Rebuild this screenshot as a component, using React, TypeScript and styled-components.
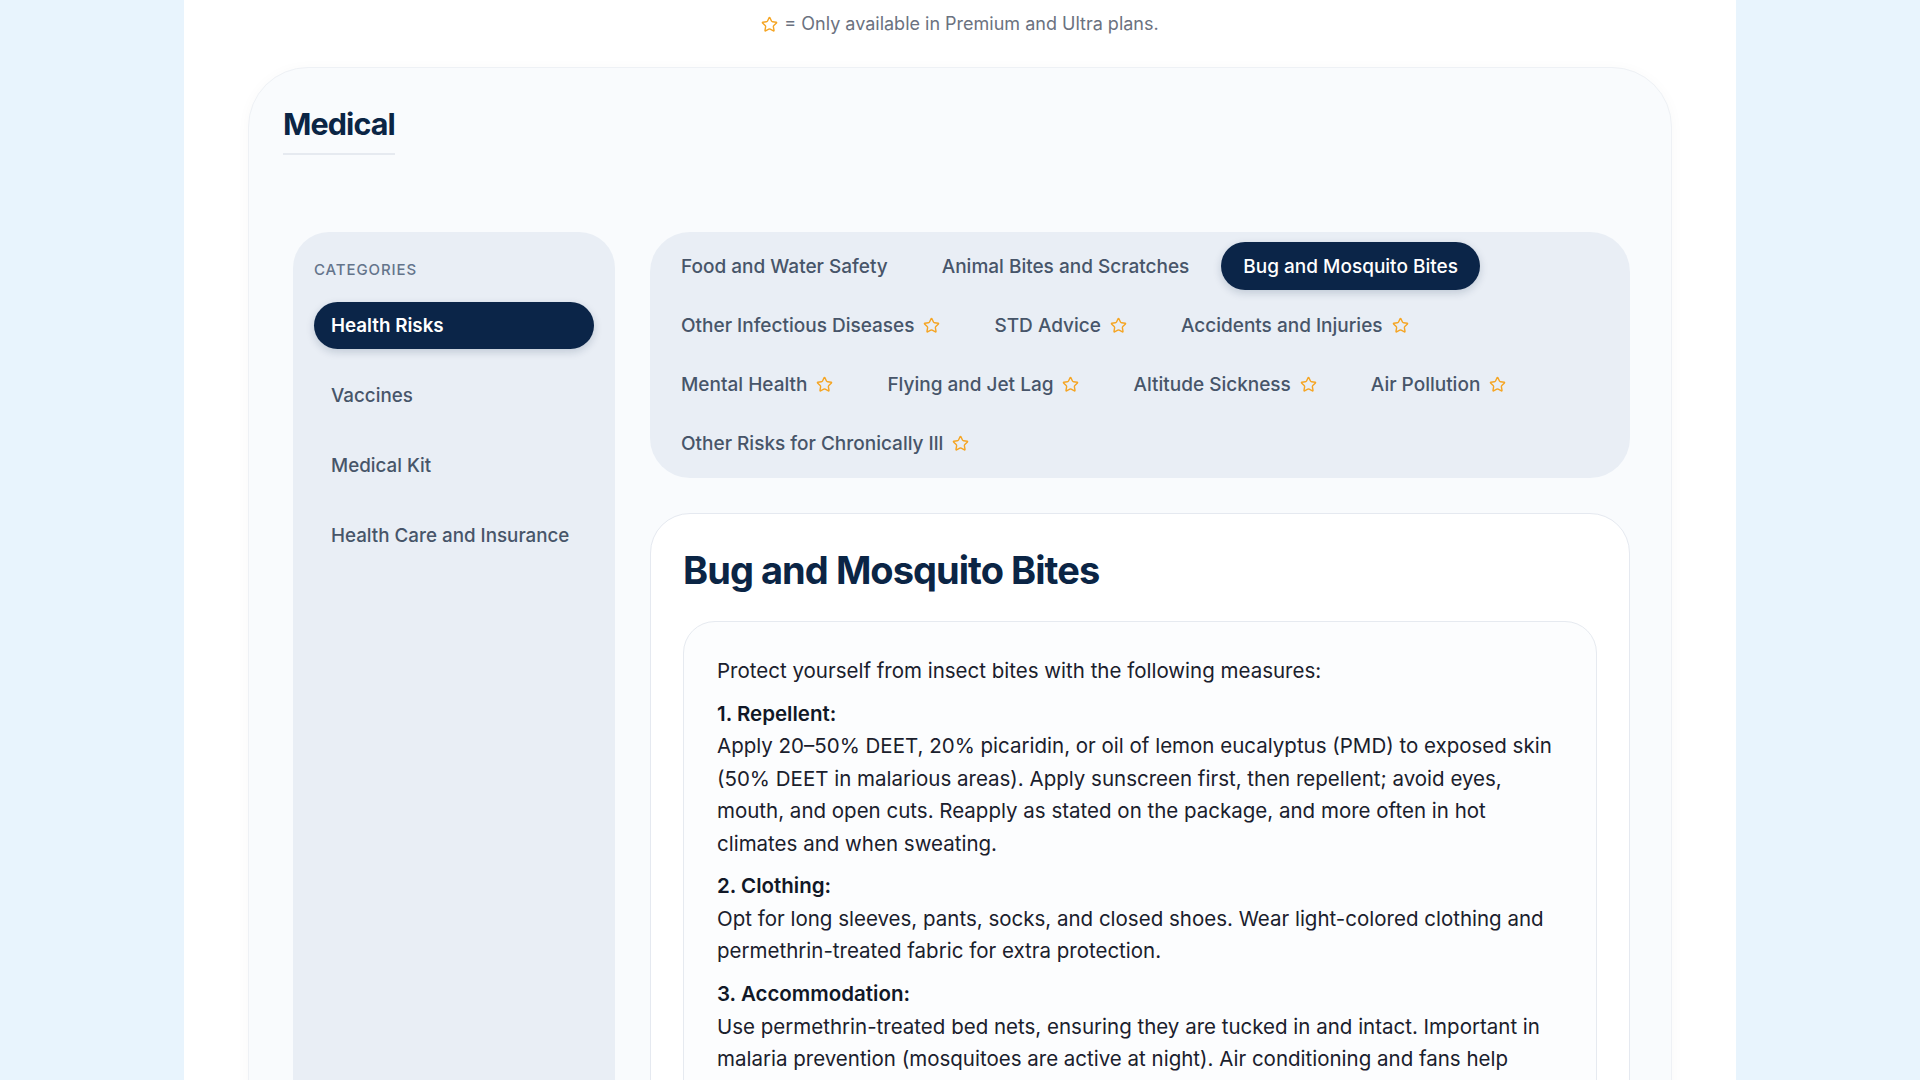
import React, { useState } from 'react';
import styled, { createGlobalStyle, css } from 'styled-components';
import { Star } from 'lucide-react';

const GlobalStyle = createGlobalStyle`
  * { box-sizing: border-box; }
  body {
    margin: 0;
    background: #e8f4fd;
    font-family: Inter, "Noto Sans", "Liberation Sans", sans-serif;
    -webkit-font-smoothing: antialiased;
  }
`;

const Page = styled.div`
  max-width: 1552px;
  min-height: 100vh;
  margin: 0 auto;
  background: #ffffff;
  padding: 13px 64px 60px;
`;

const Legend = styled.p`
  margin: 0;
  display: flex;
  justify-content: center;
  align-items: center;
  gap: 6px;
  font-size: 18px;
  line-height: 22px;
  color: #6b7280;
`;

const MedicalCard = styled.section`
  margin-top: 32px;
  background: #f9fbfd;
  border: 1px solid #eef1f5;
  border-radius: 60px;
  padding: 37px 34px 40px;
  box-shadow: 0 2px 14px rgba(15, 23, 42, 0.03);
`;

const SectionTitle = styled.h1`
  display: inline-block;
  margin: 0;
  padding-bottom: 10px;
  border-bottom: 2px solid #e6eaf0;
  font-size: 30.5px;
  line-height: 38px;
  font-weight: 700;
  letter-spacing: -0.03em;
  color: #0b2545;
`;

const Body = styled.div`
  display: grid;
  grid-template-columns: 322px 1fr;
  gap: 35px;
  margin-top: 77px;
  padding: 0 7px 0 10px;
`;

const Sidebar = styled.aside`
  background: #e9eef5;
  border-radius: 36px;
  padding: 29px 21px;
`;

const SidebarLabel = styled.div`
  font-size: 15px;
  line-height: 18px;
  font-weight: 500;
  letter-spacing: 0.06em;
  text-transform: uppercase;
  color: #64748b;
  margin-bottom: 23px;
`;

const SidebarList = styled.nav`
  display: flex;
  flex-direction: column;
  gap: 23px;
`;

const SidebarItem = styled.button<{ $active?: boolean }>`
  all: unset;
  display: block;
  height: 47px;
  line-height: 47px;
  padding: 0 17px;
  border-radius: 999px;
  font-family: inherit;
  font-size: 18.8px;
  font-weight: 500;
  color: #475569;
  cursor: pointer;

  ${p => p.$active && css`
    background: #0b2548;
    color: #ffffff;
    font-weight: 600;
    box-shadow: 0 3px 8px rgba(11, 37, 72, 0.18);
  `}
`;

const Main = styled.div`
  display: flex;
  flex-direction: column;
  gap: 35px;
  min-width: 0;
`;

const TabPanel = styled.div`
  display: flex;
  flex-wrap: wrap;
  column-gap: 10px;
  row-gap: 11px;
  background: #e9eef5;
  border-radius: 40px;
  padding: 10px 20px 11px 9px;
`;

const Tab = styled.button<{ $active?: boolean }>`
  all: unset;
  display: inline-flex;
  align-items: center;
  gap: 9px;
  height: 48px;
  padding: 0 22px;
  border-radius: 999px;
  font-family: inherit;
  font-size: 19px;
  font-weight: 500;
  color: #475569;
  cursor: pointer;

  ${p => p.$active && css`
    background: #0b2548;
    color: #ffffff;
    box-shadow: 0 3px 8px rgba(11, 37, 72, 0.18);
  `}
`;

const ContentCard = styled.article`
  background: #ffffff;
  border: 1px solid #e5e9f0;
  border-radius: 40px;
  padding: 33px 32px;
`;

const ContentTitle = styled.h2`
  margin: 0 0 28px;
  font-size: 38px;
  line-height: 46px;
  font-weight: 700;
  letter-spacing: -0.025em;
  color: #0b2545;
`;

const InfoBox = styled.div`
  background: #fcfdfe;
  border: 1px solid #e6eaf0;
  border-radius: 32px;
  padding: 33px 33px;
  font-size: 20.5px;
  line-height: 32.4px;
  color: #1a202c;
`;

const Para = styled.p`
  margin: 0 0 10.5px;
`;

const Heading = styled.strong`
  display: block;
  font-weight: 600;
  color: #111827;
`;

const StarIcon = () => <Star size={17} color="#f5a524" strokeWidth={2} />;

const categories = ['Health Risks', 'Vaccines', 'Medical Kit', 'Health Care and Insurance'];

const tabs: { label: string; premium?: boolean }[] = [
  { label: 'Food and Water Safety' },
  { label: 'Animal Bites and Scratches' },
  { label: 'Bug and Mosquito Bites' },
  { label: 'Other Infectious Diseases', premium: true },
  { label: 'STD Advice', premium: true },
  { label: 'Accidents and Injuries', premium: true },
  { label: 'Mental Health', premium: true },
  { label: 'Flying and Jet Lag', premium: true },
  { label: 'Altitude Sickness', premium: true },
  { label: 'Air Pollution', premium: true },
  { label: 'Other Risks for Chronically Ill', premium: true },
];

const sections = [
  {
    title: '1. Repellent:',
    text: 'Apply 20–50% DEET, 20% picaridin, or oil of lemon eucalyptus (PMD) to exposed skin (50% DEET in malarious areas). Apply sunscreen first, then repellent; avoid eyes, mouth, and open cuts. Reapply as stated on the package, and more often in hot climates and when sweating.',
  },
  {
    title: '2. Clothing:',
    text: 'Opt for long sleeves, pants, socks, and closed shoes. Wear light-colored clothing and permethrin-treated fabric for extra protection.',
  },
  {
    title: '3. Accommodation:',
    text: 'Use permethrin-treated bed nets, ensuring they are tucked in and intact. Important in malaria prevention (mosquitoes are active at night). Air conditioning and fans help reduce mosquito activity; choose rooms with screened windows and doors.',
  },
  {
    title: '4. Timing:',
    text: 'Be especially careful at dawn and dusk, when many mosquitoes are most active, and avoid standing water where they breed.',
  },
];

export default function App() {
  const [category, setCategory] = useState('Health Risks');
  const [tab, setTab] = useState('Bug and Mosquito Bites');

  return (
    <>
      <GlobalStyle />
      <Page>
        <Legend>
          <StarIcon />
          <span>= Only available in Premium and Ultra plans.</span>
        </Legend>

        <MedicalCard>
          <SectionTitle>Medical</SectionTitle>

          <Body>
            <Sidebar>
              <SidebarLabel>Categories</SidebarLabel>
              <SidebarList>
                {categories.map(c => (
                  <SidebarItem key={c} $active={c === category} onClick={() => setCategory(c)}>
                    {c}
                  </SidebarItem>
                ))}
              </SidebarList>
            </Sidebar>

            <Main>
              <TabPanel>
                {tabs.map(t => (
                  <Tab key={t.label} $active={t.label === tab} onClick={() => setTab(t.label)}>
                    {t.label}
                    {t.premium && <StarIcon />}
                  </Tab>
                ))}
              </TabPanel>

              <ContentCard>
                <ContentTitle>{tab}</ContentTitle>
                <InfoBox>
                  <Para>Protect yourself from insect bites with the following measures:</Para>
                  {sections.map(s => (
                    <Para key={s.title}>
                      <Heading>{s.title}</Heading>
                      {s.text}
                    </Para>
                  ))}
                </InfoBox>
              </ContentCard>
            </Main>
          </Body>
        </MedicalCard>
      </Page>
    </>
  );
}
